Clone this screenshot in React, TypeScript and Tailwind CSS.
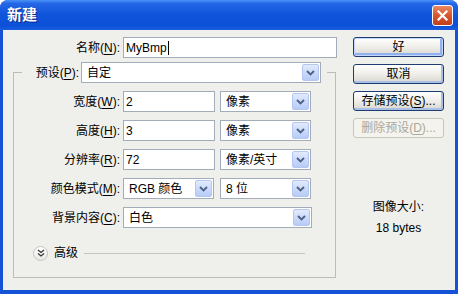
import React from "react";

function Arrow() {
  return (
    <span className="absolute right-[1px] top-[1px] bottom-[1px] w-[17px] rounded-[2px] border border-[#b5c7f0] bg-linear-to-b from-[#e2eafd] to-[#b6cbf7] flex items-center justify-center">
      <svg width="9" height="6" viewBox="0 0 9 6">
        <path d="M1 1 L4.5 4.5 L8 1" stroke="#4d6185" strokeWidth="1.8" fill="none" />
      </svg>
    </span>
  );
}

function Select({ w, text }: { w: string; text: string }) {
  return (
    <div className={`relative h-[21px] ${w} bg-white border border-[#a3adb9] flex items-center pl-[5px]`}>
      <span>{text}</span>
      <Arrow />
    </div>
  );
}

function Field({ w, text }: { w: string; text: string }) {
  return (
    <div className={`h-[21px] ${w} bg-white border border-[#a3adb9] flex items-center pl-[2px]`}>
      <span>{text}</span>
    </div>
  );
}

function Label({ main, k, w }: { main: string; k: string; w: string }) {
  return (
    <div className={`${w} text-right whitespace-nowrap`}>
      {main}(<span className="underline underline-offset-[2px]">{k}</span>):
    </div>
  );
}

function Btn({ children, primary, disabled }: { children: React.ReactNode; primary?: boolean; disabled?: boolean }) {
  if (disabled) {
    return (
      <div className="h-[20px] w-[91px] rounded-[3px] border border-[#c9c7ba] bg-[#f4f3ee] text-[#aca899] flex items-center justify-center">
        {children}
      </div>
    );
  }
  return (
    <div
      className={`h-[20px] w-[91px] rounded-[3px] border border-[#1d3d72] bg-linear-to-b from-[#ffffff] via-[#efeee9] to-[#d9d6cd] flex items-center justify-center ${
        primary
          ? "shadow-[inset_0_0_0_1px_#c3d6fb,inset_-1px_-1px_0_2px_#8fb1ee]"
          : "shadow-[inset_-1px_-1px_0_1px_#a9bfe6]"
      }`}
    >
      {children}
    </div>
  );
}

export default function App() {
  return (
    <div className="w-[458px] h-[294px] rounded-t-[8px] overflow-hidden bg-[#1553d6] flex flex-col text-[12px] leading-[16px] text-black font-[family-name:Liberation_Sans,Noto_Sans_CJK_SC,sans-serif]">
      {/* Title bar */}
      <div className="h-[30px] shrink-0 flex items-center justify-between pl-[7px] pr-[5px] bg-[linear-gradient(180deg,#4a93f6_0%,#2466e6_12%,#0f54da_50%,#0b50d6_85%,#1b5ddf_100%)]">
        <span className="text-white font-bold text-[15px] [text-shadow:1px_1px_0_#0a2a8a]">新建</span>
        <div className="w-[21px] h-[21px] rounded-[3px] border border-white bg-linear-to-b from-[#eb8a63] via-[#d8552d] to-[#c2401c] flex items-center justify-center">
          <svg width="11" height="11" viewBox="0 0 11 11">
            <path d="M1.5 1.5 L9.5 9.5 M9.5 1.5 L1.5 9.5" stroke="white" strokeWidth="2.2" strokeLinecap="square" />
          </svg>
        </div>
      </div>

      {/* Body */}
      <div className="mx-[3px] h-[260px] bg-[#efefec] flex">
        {/* Left column */}
        <div className="w-[334px] flex flex-col">
          <div className="mt-[7px] flex items-center">
            <Label main="名称" k="N" w="w-[117px]" />
            <div className="ml-[3px] h-[21px] w-[214px] bg-white border border-[#a3adb9] flex items-center pl-[2px]">
              <span>MyBmp</span>
              <span className="ml-[1px] w-[1px] h-[14px] bg-black" />
            </div>
          </div>

          {/* Group */}
          <div className="mt-[14px] ml-[10px] w-[323px] h-[206px] border border-[#bdbcb6] flex flex-col">
            <div className="-mt-[11px] ml-[8px] w-[305px] bg-[#efefec] flex items-center">
              <Label main="预设" k="P" w="w-[57px]" />
              <div className="ml-[2px]">
                <Select w="w-[240px]" text="自定" />
              </div>
            </div>

            <div className="mt-[8px] flex items-center">
              <Label main="宽度" k="W" w="w-[106px]" />
              <div className="ml-[3px]"><Field w="w-[92px]" text="2" /></div>
              <div className="ml-[5px]"><Select w="w-[91px]" text="像素" /></div>
            </div>
            <div className="mt-[8px] flex items-center">
              <Label main="高度" k="H" w="w-[106px]" />
              <div className="ml-[3px]"><Field w="w-[92px]" text="3" /></div>
              <div className="ml-[5px]"><Select w="w-[91px]" text="像素" /></div>
            </div>
            <div className="mt-[8px] flex items-center">
              <Label main="分辨率" k="R" w="w-[106px]" />
              <div className="ml-[3px]"><Field w="w-[92px]" text="72" /></div>
              <div className="ml-[5px]"><Select w="w-[91px]" text="像素/英寸" /></div>
            </div>
            <div className="mt-[8px] flex items-center">
              <Label main="颜色模式" k="M" w="w-[106px]" />
              <div className="ml-[3px]"><Select w="w-[91px]" text="RGB 颜色" /></div>
              <div className="ml-[6px]"><Select w="w-[91px]" text="8 位" /></div>
            </div>
            <div className="mt-[8px] flex items-center">
              <Label main="背景内容" k="C" w="w-[106px]" />
              <div className="ml-[3px]"><Select w="w-[189px]" text="白色" /></div>
            </div>

            <div className="mt-[17px] ml-[19px] flex items-center h-[16px]">
              <span className="w-[15px] h-[15px] rounded-full border border-[#c4c4c0] bg-linear-to-b from-white to-[#e9e9e6] flex items-center justify-center">
                <svg width="8" height="8" viewBox="0 0 8 8">
                  <path d="M1 1 L4 3.5 L7 1 M1 4.5 L4 7 L7 4.5" stroke="#3a3a3a" strokeWidth="1.3" fill="none" />
                </svg>
              </span>
              <span className="ml-[6px]">高级</span>
              <span className="ml-[6px] w-[221px] h-[1px] bg-[#c4c4c0]" />
            </div>
          </div>
        </div>

        {/* Right column */}
        <div className="pl-[16px] pt-[7px] flex flex-col">
          <Btn primary>好</Btn>
          <div className="mt-[7px]"><Btn>取消</Btn></div>
          <div className="mt-[7px]">
            <Btn>
              存储预设(<span className="underline underline-offset-[2px]">S</span>)...
            </Btn>
          </div>
          <div className="mt-[7px]">
            <Btn disabled>
              删除预设(<span className="underline underline-offset-[2px]">D</span>)...
            </Btn>
          </div>
          <div className="mt-[61px] w-[91px] flex flex-col items-center">
            <span>图像大小:</span>
            <span className="mt-[5px]">18 bytes</span>
          </div>
        </div>
      </div>
    </div>
  );
}
